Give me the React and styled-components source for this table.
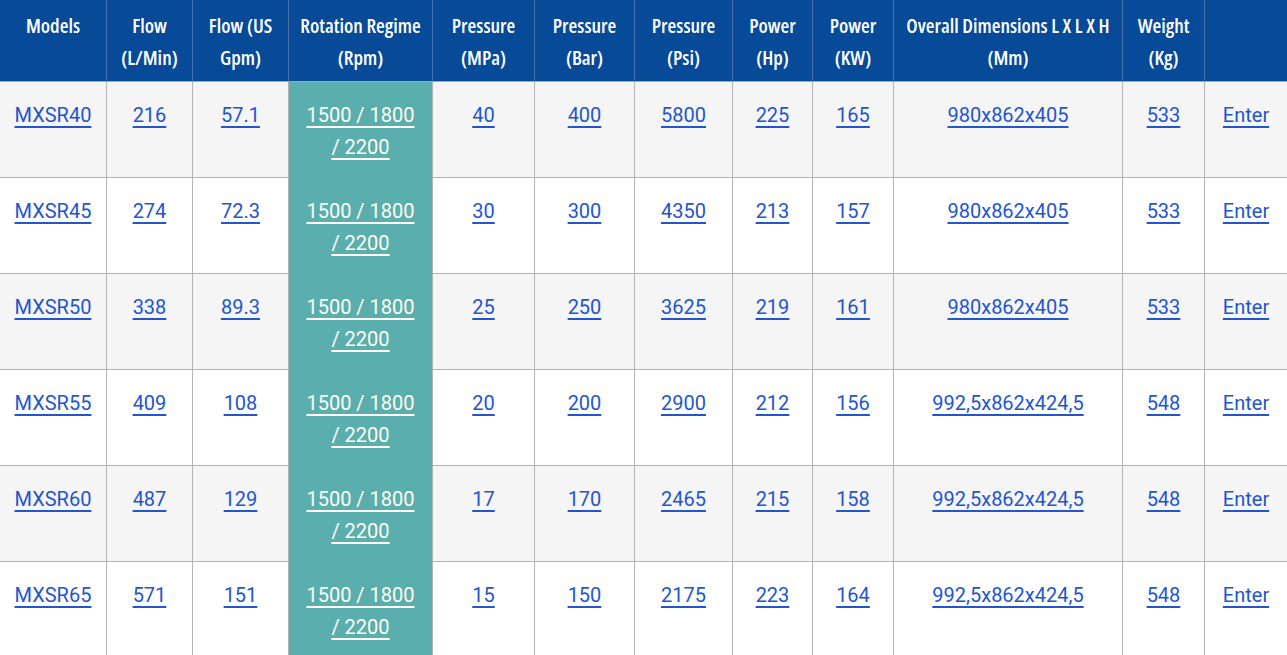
import React from "react";
import styled, { createGlobalStyle } from "styled-components";

const GlobalStyle = createGlobalStyle`
  body {
    margin: 0;
    background: #ffffff;
    font-family: Roboto, "Liberation Sans", sans-serif;
  }
`;

const columns = [
  { label: ["Models"], width: 107 },
  { label: ["Flow", "(L/Min)"], width: 86 },
  { label: ["Flow (US", "Gpm)"], width: 96 },
  { label: ["Rotation Regime", "(Rpm)"], width: 144 },
  { label: ["Pressure", "(MPa)"], width: 102 },
  { label: ["Pressure", "(Bar)"], width: 100 },
  { label: ["Pressure", "(Psi)"], width: 98 },
  { label: ["Power", "(Hp)"], width: 80 },
  { label: ["Power", "(KW)"], width: 81 },
  { label: ["Overall Dimensions L X L X H", "(Mm)"], width: 229 },
  { label: ["Weight", "(Kg)"], width: 82 },
  { label: [""], width: 82 },
];

const rows = [
  ["MXSR40", "216", "57.1", "40", "400", "5800", "225", "165", "980x862x405", "533"],
  ["MXSR45", "274", "72.3", "30", "300", "4350", "213", "157", "980x862x405", "533"],
  ["MXSR50", "338", "89.3", "25", "250", "3625", "219", "161", "980x862x405", "533"],
  ["MXSR55", "409", "108", "20", "200", "2900", "212", "156", "992,5x862x424,5", "548"],
  ["MXSR60", "487", "129", "17", "170", "2465", "215", "158", "992,5x862x424,5", "548"],
  ["MXSR65", "571", "151", "15", "150", "2175", "223", "164", "992,5x862x424,5", "548"],
];

const Table = styled.table`
  width: 1287px;
  table-layout: fixed;
  border-collapse: separate;
  border-spacing: 0;
`;

const HeadCell = styled.th`
  box-sizing: border-box;
  height: 82px;
  padding: 10px 2px 0;
  vertical-align: top;
  background: #074a97;
  color: #ffffff;
  font-family: "Open Sans", "Noto Sans", sans-serif;
  font-stretch: 82%;
  font-weight: 600;
  font-size: 20px;
  line-height: 32px;
  text-align: center;
  white-space: nowrap;
  border-right: ${(p) => (p.$last ? "none" : "1px solid #4a72a6")};
  border-bottom: 1px solid #a8a8a8;
`;

const Row = styled.tr`
  background: ${(p) => (p.$striped ? "#f5f5f5" : "#ffffff")};
`;

const Cell = styled.td`
  box-sizing: border-box;
  height: 96px;
  padding: 17px 4px 0;
  vertical-align: top;
  text-align: center;
  font-size: 20px;
  line-height: 32px;
  background: ${(p) => (p.$accent ? "#5aafae" : "transparent")};
  border-right: ${(p) => (p.$last ? "none" : "1px solid #b4b4b4")};
  border-bottom: 1px solid ${(p) => (p.$accent ? "#5aafae" : "#b4b4b4")};
`;

const CellLink = styled.a`
  color: ${(p) => (p.$light ? "#fffdf2" : "#2356cc")};
  text-decoration: underline;
  text-decoration-thickness: 2px;
  text-underline-offset: 4px;
  cursor: pointer;
`;

const RegimeText = styled.span`
  display: inline-block;
  width: 110px;
`;

export default function App() {
  return (
    <>
      <GlobalStyle />
      <Table>
        <colgroup>
          {columns.map((c, i) => (
            <col key={i} style={{ width: c.width }} />
          ))}
        </colgroup>
        <thead>
          <tr>
            {columns.map((c, i) => (
              <HeadCell key={i} $last={i === columns.length - 1}>
                {c.label.map((line, j) => (
                  <div key={j}>{line}</div>
                ))}
              </HeadCell>
            ))}
          </tr>
        </thead>
        <tbody>
          {rows.map((r, i) => {
            const [model, flow, flowUs, ...rest] = r;
            return (
              <Row key={model} $striped={i % 2 === 0}>
                <Cell>
                  <CellLink>{model}</CellLink>
                </Cell>
                <Cell>
                  <CellLink>{flow}</CellLink>
                </Cell>
                <Cell>
                  <CellLink>{flowUs}</CellLink>
                </Cell>
                <Cell $accent>
                  <RegimeText>
                    <CellLink $light>1500 / 1800 / 2200</CellLink>
                  </RegimeText>
                </Cell>
                {rest.map((v, j) => (
                  <Cell key={j}>
                    <CellLink>{v}</CellLink>
                  </Cell>
                ))}
                <Cell $last>
                  <CellLink>Enter</CellLink>
                </Cell>
              </Row>
            );
          })}
        </tbody>
      </Table>
    </>
  );
}
